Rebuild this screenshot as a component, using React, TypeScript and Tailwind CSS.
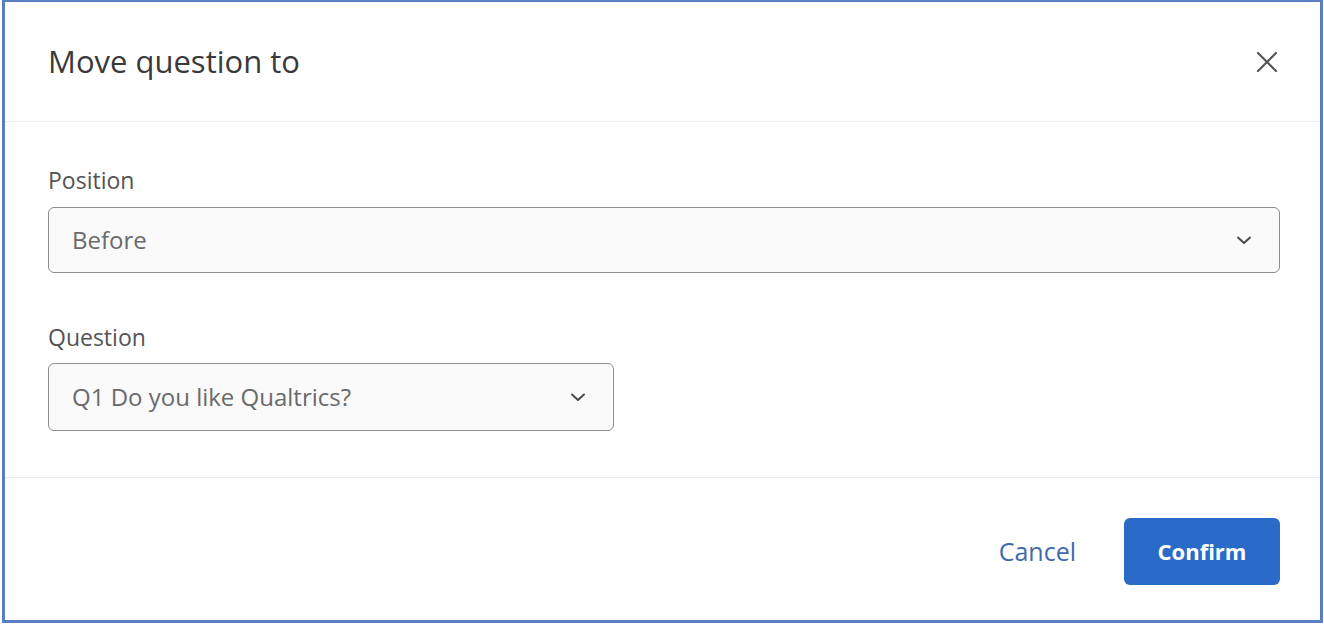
import { useState } from 'react';

function Chevron() {
    return (
        <svg width="18" height="18" viewBox="0 0 18 18" fill="none" className="shrink-0">
            <path d="M3 6.5l6 5.5 6-5.5" stroke="#4a4a4a" strokeWidth="2" strokeLinecap="round" strokeLinejoin="round" />
        </svg>
    );
}

function Select({ value, className }: { value: string; className: string }) {
    return (
        <div
            className={
                'flex items-center justify-between rounded-[6px] border border-[#8e8e8e] bg-[#fafafa] pl-[23px] pr-[26px] ' +
                className
            }
        >
            <span className="text-[24px] text-[#6a6a6a]">{value}</span>
            <Chevron />
        </div>
    );
}

export default function App() {
    const [position] = useState('Before');
    const [question] = useState('Q1 Do you like Qualtrics?');

    return (
        <div className="w-[1324px] h-[626px] bg-white" style={{ fontFamily: '"Open Sans", Roboto, sans-serif' }}>
            <div className="ml-[2px] w-[1321px] h-[623px] border-[3px] border-t-2 border-[#5a7fc1] flex flex-col">
                {/* header */}
                <div className="h-[120px] shrink-0 flex items-center justify-between pl-[43px] pr-[40px] border-b border-[#ececec]">
                    <h2 className="text-[31px] font-normal text-[#3a3a3a]">Move question to</h2>
                    <button className="w-[30px] h-[30px] flex items-center justify-center mr-[-2px]">
                        <svg width="24" height="24" viewBox="0 0 24 24" fill="none">
                            <path d="M3 3l18 18M21 3L3 21" stroke="#555" strokeWidth="2.2" strokeLinecap="round" />
                        </svg>
                    </button>
                </div>

                {/* body */}
                <div className="h-[356px] shrink-0 pl-[43px] pr-[40px] pt-[43px] border-b border-[#ececec]">
                    <label className="block text-[23px] leading-[30px] text-[#545454]">Position</label>
                    <Select value={position} className="mt-[12px] h-[66px] w-full" />
                    <label className="block mt-[49px] text-[23px] leading-[30px] text-[#545454]">Question</label>
                    <Select value={question} className="mt-[11px] h-[68px] w-[566px]" />
                </div>

                {/* footer */}
                <div className="flex-1 flex items-start justify-end gap-[28px] pl-[43px] pr-[40px] pt-[40px]">
                    <button className="h-[67px] px-[20px] text-[25px] text-[#3f6aad]">Cancel</button>
                    <button className="h-[67px] w-[156px] rounded-[6px] bg-[#2b6bc8] text-[22px] font-bold text-white">
                        Confirm
                    </button>
                </div>
            </div>
        </div>
    );
}
